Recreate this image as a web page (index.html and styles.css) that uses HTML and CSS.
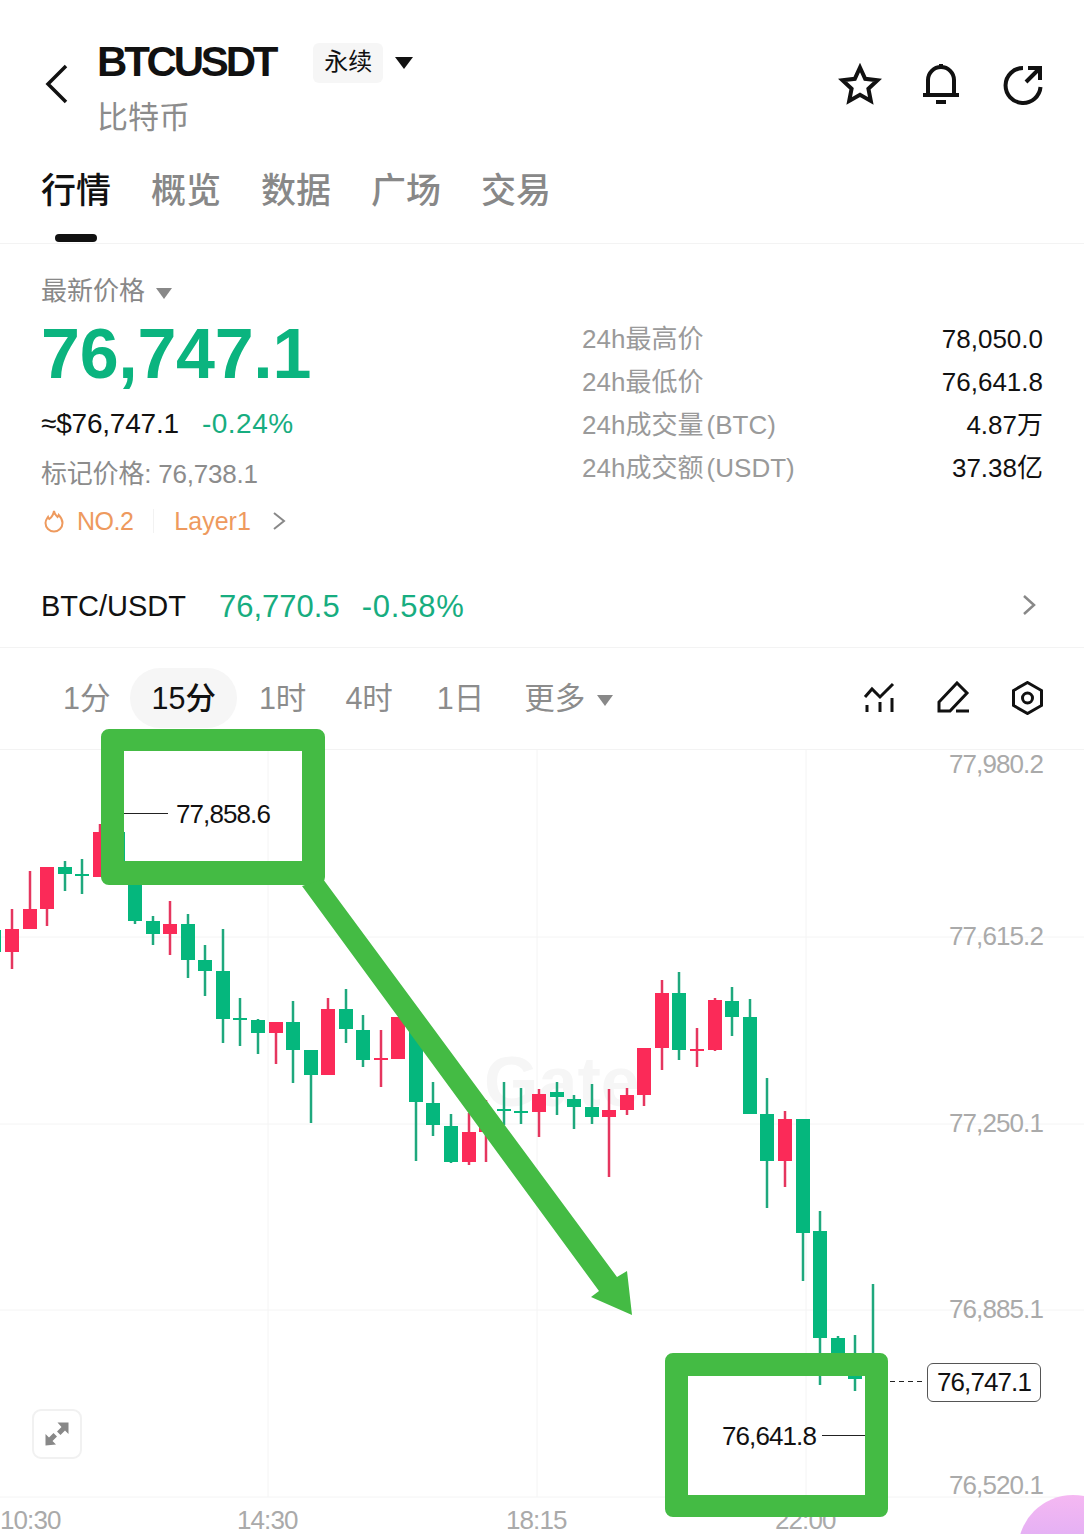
FILE: index.html
```html
<!DOCTYPE html>
<html lang="zh-CN">
  <head>
    <meta charset="UTF-8" />
    <meta name="viewport" content="width=device-width, initial-scale=1.0" />
    <title>BTCUSDT</title>
    <link rel="stylesheet" href="styles.css">
  </head>
  <body>
    <header class="top">
      <svg class="back" width="26" height="40" viewBox="0 0 26 40"><path d="M23 2 5 20l18 18"/></svg>
      <div class="title">
        <div class="title-row">
          <h1>BTCUSDT</h1>
          <span class="badge">永续</span>
          <span class="caret caret-big"></span>
        </div>
        <div class="subtitle">比特币</div>
      </div>
      <div class="top-icons">
        <svg width="44" height="44" viewBox="0 0 44 44"><path d="M22 4.500l5.200 11.300 12.300 1.500-9.100 8.400 2.400 12.200L22 31.800l-10.800 6.100 2.400-12.200-9.100-8.400 12.300-1.500z"/></svg>
        <svg width="44" height="44" viewBox="0 0 44 44"><path d="M9 32V17a13 13 0 0 1 26 0v15M4 32h36M22 1v3M17 39h10"/></svg>
        <svg width="44" height="44" viewBox="0 0 44 44"><path d="M23 5a17.500 17.500 0 1 0 17.500 19M26 19 39 6M28 5h12v12"/></svg>
      </div>
    </header>

    <nav class="tabs">
      <a class="tab active">行情</a>
      <a class="tab">概览</a>
      <a class="tab">数据</a>
      <a class="tab">广场</a>
      <a class="tab">交易</a>
    </nav>

    <section class="stats">
      <div class="price-col">
        <div class="latest">最新价格 <span class="caret"></span></div>
        <div class="price">76,747.1</div>
        <div class="approx">≈$76,747.1<span class="change">-0.24%</span></div>
        <div class="mark">标记价格: 76,738.1</div>
        <div class="tags">
          <svg width="20" height="24" viewBox="0 0 20 24"><path d="M10 2c.5 3.500 2 4 3.500 6 .6-.6 1-1.300 1.200-2 2 2 3.800 4.600 3.800 8a8.500 8.500 0 0 1-17 0c0-3 1.500-4.500 2.500-6 .3 1 .7 1.500 1.300 2C8 8 9.500 5 10 2z"/></svg>
          <span class="tag-no">NO.2</span>
          <span class="tag-line"></span>
          <span class="tag-name">Layer1</span>
          <svg class="tag-more" width="14" height="20" viewBox="0 0 14 20"><path d="m2 2 10 8-10 8"/></svg>
        </div>
      </div>
      <div class="facts">
        <div class="fact"><span>24h最高价</span><b>78,050.0</b></div>
        <div class="fact"><span>24h最低价</span><b>76,641.8</b></div>
        <div class="fact"><span>24h成交量 (BTC)</span><b>4.87万</b></div>
        <div class="fact"><span>24h成交额 (USDT)</span><b>37.38亿</b></div>
      </div>
    </section>

    <section class="spot">
      <span class="spot-name">BTC/USDT</span>
      <span class="spot-price">76,770.5</span>
      <span class="spot-change">-0.58%</span>
      <svg class="spot-more" width="14" height="22" viewBox="0 0 14 22"><path d="m2 2 10 9-10 9"/></svg>
    </section>

    <section class="periods">
      <a class="period p1">1分</a>
      <a class="period on">15分</a>
      <a class="period p2">1时</a>
      <a class="period p3">4时</a>
      <a class="period p4">1日</a>
      <a class="period p5">更多 <span class="caret"></span></a>
      <div class="chart-tools">
        <svg width="34" height="34" viewBox="0 0 34 34"><path d="M3 16l7-8 8 8L31 3M5 24v7M18 21v10M30 17v14"/></svg>
        <svg width="34" height="34" viewBox="0 0 34 34"><path d="M3 30v-9L21 2l10 10-17 18zM20 30h13"/></svg>
        <svg width="34" height="34" viewBox="0 0 34 34"><path d="M17.500 1.500 31.500 9.500v15L17.500 32.500 3.500 24.500v-15z"/><circle cx="17.500" cy="17" r="5"/></svg>
      </div>
    </section>

    <section class="chart">
      <svg class="candles" width="1084" height="784" viewBox="0 750 1084 784">
        <g class="grid">
          <path d="M0 937H1084M0 1124H1084M0 1310H1084M0 1497H1084M268 750V1497M537 750V1497M806 750V1497"/>
        </g>
        <text class="mark-logo" x="484" y="1106">Gate</text>
        <g class="up">
          <path d="M-6 912V965"/><rect x="-13" y="930" width="14" height="22"/>
          <path d="M65 861V891"/><rect x="58" y="867" width="14" height="7"/>
          <path d="M82 859V894"/><rect x="75" y="874" width="14" height="2"/>
          <path d="M118 830V880"/><rect x="111" y="832" width="14" height="40"/>
          <path d="M135 861V924"/><rect x="128" y="870" width="14" height="51"/>
          <path d="M153 916V945"/><rect x="146" y="921" width="14" height="13"/>
          <path d="M188 914V978"/><rect x="181" y="924" width="14" height="36"/>
          <path d="M205 945V996"/><rect x="198" y="960" width="14" height="11"/>
          <path d="M223 929V1043"/><rect x="216" y="971" width="14" height="48"/>
          <path d="M240 998V1046"/><rect x="233" y="1018" width="14" height="2"/>
          <path d="M258 1019V1054"/><rect x="251" y="1020" width="14" height="13"/>
          <path d="M293 1001V1083"/><rect x="286" y="1022" width="14" height="28"/>
          <path d="M311 1050V1123"/><rect x="304" y="1050" width="14" height="25"/>
          <path d="M346 989V1043"/><rect x="339" y="1009" width="14" height="20"/>
          <path d="M363 1015V1067"/><rect x="356" y="1030" width="14" height="30"/>
          <path d="M416 1022V1161"/><rect x="409" y="1032" width="14" height="70"/>
          <path d="M433 1082V1136"/><rect x="426" y="1103" width="14" height="22"/>
          <path d="M451 1114V1163"/><rect x="444" y="1126" width="14" height="36"/>
          <path d="M504 1082V1125"/><rect x="497" y="1109" width="14" height="2"/>
          <path d="M521 1088V1124"/><rect x="514" y="1111" width="14" height="2"/>
          <path d="M557 1082V1115"/><rect x="550" y="1092" width="14" height="5"/>
          <path d="M574 1095V1129"/><rect x="567" y="1099" width="14" height="8"/>
          <path d="M592 1084V1124"/><rect x="585" y="1107" width="14" height="10"/>
          <path d="M679 972V1060"/><rect x="672" y="993" width="14" height="57"/>
          <path d="M732 987V1036"/><rect x="725" y="1001" width="14" height="16"/>
          <path d="M750 999V1114"/><rect x="743" y="1017" width="14" height="97"/>
          <path d="M767 1078V1208"/><rect x="760" y="1114" width="14" height="47"/>
          <path d="M803 1119V1281"/><rect x="796" y="1119" width="14" height="114"/>
          <path d="M820 1211V1385"/><rect x="813" y="1231" width="14" height="107"/>
          <path d="M838 1336V1376"/><rect x="831" y="1338" width="14" height="22"/>
          <path d="M855 1335V1391"/><rect x="848" y="1376" width="14" height="3"/>
          <path d="M873 1284V1372"/><rect x="866" y="1360" width="14" height="10"/>
        </g>
        <g class="down">
          <path d="M12 909V969"/><rect x="5" y="929" width="14" height="23"/>
          <path d="M30 871V929"/><rect x="23" y="909" width="14" height="20"/>
          <path d="M47 867V926"/><rect x="40" y="867" width="14" height="42"/>
          <path d="M100 824V877"/><rect x="93" y="832" width="14" height="45"/>
          <path d="M170 901V955"/><rect x="163" y="924" width="14" height="10"/>
          <path d="M276 1022V1064"/><rect x="269" y="1022" width="14" height="11"/>
          <path d="M328 998V1075"/><rect x="321" y="1009" width="14" height="66"/>
          <path d="M381 1030V1087"/><rect x="374" y="1058" width="14" height="2"/>
          <path d="M398 1017V1059"/><rect x="391" y="1017" width="14" height="42"/>
          <path d="M469 1113V1165"/><rect x="462" y="1132" width="14" height="30"/>
          <path d="M486 1100V1162"/><rect x="479" y="1112" width="14" height="20"/>
          <path d="M539 1089V1137"/><rect x="532" y="1094" width="14" height="18"/>
          <path d="M609 1089V1177"/><rect x="602" y="1110" width="14" height="7"/>
          <path d="M627 1088V1115"/><rect x="620" y="1095" width="14" height="15"/>
          <path d="M644 1048V1106"/><rect x="637" y="1048" width="14" height="47"/>
          <path d="M662 980V1070"/><rect x="655" y="993" width="14" height="55"/>
          <path d="M697 1028V1067"/><rect x="690" y="1049" width="14" height="2"/>
          <path d="M715 998V1051"/><rect x="708" y="1000" width="14" height="50"/>
          <path d="M785 1111V1187"/><rect x="778" y="1119" width="14" height="42"/>
        </g>
        <path class="leader" d="M124 813.500H168M822 1435.500H865"/>
        <path class="leader dashed" d="M890 1381.500H926"/>
      </svg>

      <span class="axis-y a1">77,980.2</span>
      <span class="axis-y a2">77,615.2</span>
      <span class="axis-y a3">77,250.1</span>
      <span class="axis-y a4">76,885.1</span>
      <span class="axis-y a5">76,520.1</span>
      <span class="axis-x t1">10:30</span>
      <span class="axis-x t2">14:30</span>
      <span class="axis-x t3">18:15</span>
      <span class="axis-x t4">22:00</span>

      <span class="extreme high">77,858.6</span>
      <span class="extreme low">76,641.8</span>
      <span class="last-price">76,747.1</span>

      <div class="expand">
        <svg width="24" height="24" viewBox="0 0 24 24"><path d="M23.500.5v11.500l-3.500-3.500-4.500 4.500-3.500-3.500 4.500-4.500L12.500.5zM.5 23.500V12l3.500 3.500 4.500-4.500 3.500 3.500-4.500 4.500 3.500 3.500z"/></svg>
      </div>
      <div class="blob"></div>

      <svg class="marks" width="1084" height="805" viewBox="0 729 1084 805">
        <path fill-rule="evenodd" d="M109 729h208a8 8 0 0 1 8 8v140a8 8 0 0 1-8 8H109a8 8 0 0 1-8-8V737a8 8 0 0 1 8-8zM124 751v110h178V751z"/>
        <path fill-rule="evenodd" d="M673 1353h207a8 8 0 0 1 8 8v148a8 8 0 0 1-8 8H673a8 8 0 0 1-8-8v-148a8 8 0 0 1 8-8zM688 1376v119h177v-119z"/>
        <path d="M302 886 323 879 617 1277 627 1271 632 1315 591 1297 599 1291z"/>
      </svg>
    </section>
  </body>
</html>
```

FILE: styles.css
```css
* {
  box-sizing: border-box;
}
body {
  margin: 0;
  width: 1084px;
  height: 1534px;
  overflow: hidden;
  background: #fff;
  color: #111;
  font-family: "Liberation Sans", "Noto Sans CJK SC", sans-serif;
}
svg {
  display: block;
  flex: none;
}
.caret {
  display: inline-block;
  width: 0;
  height: 0;
  border-left: 8px solid transparent;
  border-right: 8px solid transparent;
  border-top: 11px solid #888;
  vertical-align: middle;
}
.caret-big {
  margin-left: 12px;
  border-left-width: 9px;
  border-right-width: 9px;
  border-top: 12px solid #111;
}

/* header */
.top {
  display: flex;
  align-items: flex-start;
  height: 150px;
  padding: 38px 40px 0 43px;
}
.back {
  margin-top: 26px;
}
.back path {
  fill: none;
  stroke: #111;
  stroke-width: 3.500;
}
.title {
  margin-left: 28px;
}
.title-row {
  display: flex;
  align-items: center;
  height: 50px;
}
h1 {
  margin: 0 0 2px;
  font-size: 42px;
  font-weight: 700;
  letter-spacing: -3.200px;
}
.badge {
  margin-left: 38px;
  width: 70px;
  height: 40px;
  line-height: 38px;
  text-align: center;
  font-size: 24px;
  background: #f6f6f6;
  border-radius: 6px;
}
.subtitle {
  margin-top: 8px;
  font-size: 31px;
  line-height: 44px;
  color: #8c8c8c;
}
.top-icons {
  display: flex;
  gap: 37px;
  margin-left: auto;
  margin-top: 25px;
}
.top-icons path {
  fill: none;
  stroke: #111;
  stroke-width: 4;
}

/* tabs */
.tabs {
  display: flex;
  gap: 40px;
  height: 94px;
  padding: 15px 0 0 41px;
  border-bottom: 1px solid #f3f3f3;
}
.tab {
  position: relative;
  font-size: 35px;
  font-weight: 500;
  line-height: 52px;
  color: #888;
}
.active {
  color: #111;
}
.active::after {
  content: "";
  position: absolute;
  left: 14px;
  top: 69px;
  width: 42px;
  height: 8px;
  background: #111;
  border-radius: 4px;
}

/* price block */
.stats {
  display: flex;
  height: 308px;
  padding: 28px 41px 0;
}
.price-col {
  width: 541px;
}
.latest {
  font-size: 26px;
  line-height: 38px;
  color: #888;
}
.latest .caret {
  margin-left: 4px;
}
.price {
  margin-top: 2px;
  font-size: 70px;
  line-height: 84px;
  font-weight: 700;
  letter-spacing: -0.300px;
  color: #0bb47f;
}
.approx {
  margin-top: 8px;
  font-size: 28px;
  line-height: 40px;
  letter-spacing: -0.200px;
}
.change {
  margin-left: 23px;
  letter-spacing: 0.500px;
  color: #17ad80;
}
.mark {
  margin-top: 10px;
  font-size: 26px;
  line-height: 40px;
  letter-spacing: -0.200px;
  color: #8c8c8c;
}
.tags {
  display: flex;
  align-items: center;
  height: 48px;
  margin-top: 3px;
  padding-left: 3px;
  font-size: 25px;
  color: #ee9a5e;
}
.tags path {
  fill: none;
  stroke: #ee9a5e;
  stroke-width: 2;
}
.tag-no {
  margin-left: 13px;
  letter-spacing: -0.500px;
}
.tag-line {
  width: 1px;
  height: 24px;
  margin: 0 20px;
  background: #f2f2f2;
}
.tags .tag-more {
  margin-left: 21px;
}
.tags .tag-more path {
  stroke: #888;
}
.facts {
  flex: 1;
  padding-top: 46px;
}
.fact {
  display: flex;
  justify-content: space-between;
  height: 43px;
  line-height: 43px;
  font-size: 26px;
  color: #9a9a9a;
}
.fact span {
  word-spacing: -4px;
}
.fact b {
  font-weight: 400;
  color: #111;
}

/* spot row */
.spot {
  display: flex;
  align-items: center;
  height: 96px;
  padding: 14px 48px 0 41px;
  border-bottom: 1px solid #f3f3f3;
  font-size: 31px;
}
.spot-name {
  font-size: 29px;
}
.spot-price {
  margin-left: 33px;
  color: #17ad80;
}
.spot-change {
  margin-left: 22px;
  letter-spacing: 0.800px;
  color: #17ad80;
}
.spot-more {
  margin-left: auto;
  margin-bottom: 4px;
}
.spot-more path {
  fill: none;
  stroke: #888;
  stroke-width: 2.500;
}

/* period row */
.periods {
  display: flex;
  align-items: center;
  height: 102px;
  padding: 0 40px 2px 0;
  border-bottom: 1px solid #f3f3f3;
  font-size: 30.500px;
  line-height: 60px;
  color: #8c8c8c;
}
.p1 {
  margin-left: 63px;
}
.on {
  margin-left: 20px;
  padding: 0 21px;
  height: 60px;
  color: #111;
  font-weight: 500;
  background: #f6f6f6;
  border-radius: 30px;
}
.p2 {
  margin-left: 22px;
}
.p3 {
  margin-left: 39px;
}
.p4 {
  margin-left: 44px;
}
.p5 {
  margin-left: 40px;
}
.p5 .caret {
  margin-left: 3px;
}
.chart-tools {
  display: flex;
  gap: 40px;
  margin-left: auto;
}
.chart-tools path,
.chart-tools circle {
  fill: none;
  stroke: #111;
  stroke-width: 3;
}

/* chart, a free canvas */
.chart {
  position: relative;
  height: 784px;
}
.candles {
  position: absolute;
  left: 0;
  top: 0;
}
.grid path {
  fill: none;
  stroke: #f4f4f4;
  stroke-width: 1;
}
.mark-logo {
  font-size: 70px;
  font-weight: 700;
  fill: #f6f6f6;
}
.up rect {
  fill: #05b77d;
}
.up path {
  stroke: #1fa87d;
  stroke-width: 2.500;
}
.down rect {
  fill: #fb2a58;
}
.down path {
  stroke: #e5365f;
  stroke-width: 2.500;
}
.leader {
  fill: none;
  stroke: #222;
  stroke-width: 1;
}
.dashed {
  stroke-dasharray: 5 4;
}
.axis-y,
.axis-x {
  position: absolute;
  font-size: 26px;
  line-height: 30px;
  letter-spacing: -0.900px;
  color: #aaa;
}
.axis-y {
  right: 41px;
}
.a1 { top: -1px; }
.a2 { top: 171px; }
.a3 { top: 358px; }
.a4 { top: 544px; }
.a5 { top: 720px; }
.axis-x {
  top: 755px;
}
.t1 { left: 0; }
.t2 { left: 237px; }
.t3 { left: 506px; }
.t4 { left: 775px; }
.extreme {
  position: absolute;
  font-size: 26px;
  line-height: 30px;
  letter-spacing: -0.900px;
}
.high {
  left: 176px;
  top: 49px;
}
.low {
  left: 722px;
  top: 671px;
}
.last-price {
  position: absolute;
  left: 927px;
  top: 613px;
  width: 114px;
  height: 39px;
  border: 1px solid #555;
  border-radius: 6px;
  text-align: center;
  font-size: 26px;
  line-height: 37px;
  letter-spacing: -0.900px;
}
.expand {
  position: absolute;
  left: 32px;
  top: 659px;
  display: flex;
  align-items: center;
  justify-content: center;
  width: 50px;
  height: 50px;
  border: 2px solid #f1f1f1;
  border-radius: 9px;
}
.expand path {
  fill: #888;
}
.blob {
  position: absolute;
  left: 1018px;
  top: 745px;
  width: 110px;
  height: 110px;
  border-radius: 50%;
  background: linear-gradient(#f5b8f2, #c8a4f8);
}
.marks {
  position: absolute;
  left: 0;
  top: -21px;
}
.marks path {
  fill: #44bb44;
}
```
